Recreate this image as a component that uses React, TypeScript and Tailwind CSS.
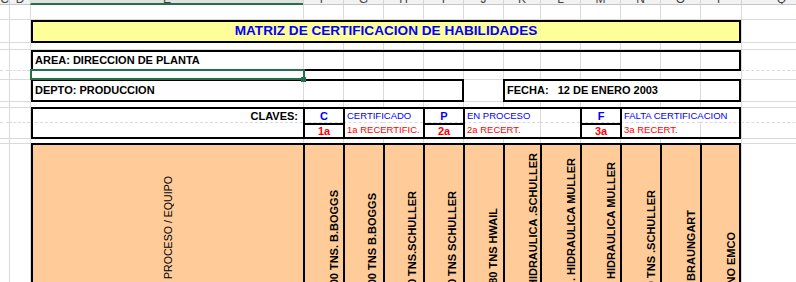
import clsx from 'clsx'

const COLS = ['C', 'D', 'E', 'F', 'G', 'H', 'I', 'J', 'K', 'L', 'M', 'N', 'O', 'P', 'Q']
const ROWS = 11

// gridline cells whose left line is covered by overflowing text
const hiddenLeft: Record<number, number[]> = {
  5: [9, 10, 11, 12],
  7: [5, 8, 12, 13],
  8: [5, 8, 12],
}
const dashedRows = [3, 7]

const sheetCols =
  'grid-cols-[9px_21px_273px_40px_40px_40px_40px_40px_37px_40px_40px_40px_40px_41px_80px]'
const sheetRows = 'grid-rows-[15px_23px_7px_21px_9px_22px_6px_15px_16px_5px_160px]'

const machines = [
  { text: 'PRENSA 500 TNS. B.BOGGS', mt: 'mt-[45px]', pr: 'pr-[2px]' },
  { text: 'PRENSA 300 TNS B.BOGGS', mt: 'mt-[48px]', pr: 'pr-[4px]' },
  { text: 'PRENSA 200 TNS.SCHULLER', mt: 'mt-[46px]', pr: 'pr-[4px]' },
  { text: 'PRENSA 400 TNS SCHULLER', mt: 'mt-[46px]', pr: 'pr-[4px]' },
  { text: 'PRENSA 180 TNS HWAIL', mt: 'mt-[63px]', pr: 'pr-[3px]' },
  { text: 'PRENSA HIDRAULICA .SCHULLER', mt: 'mt-[8px]', pr: 'pr-0' },
  { text: 'PRENSA . HIDRAULICA MULLER', mt: 'mt-[13px]', pr: 'pr-[2px]' },
  { text: 'PRENSA  HIDRAULICA MULLER', mt: 'mt-[17px]', pr: 'pr-[2px]' },
  { text: 'PRENSA 80 TNS .SCHULLER', mt: 'mt-[45px]', pr: 'pr-[2px]' },
  { text: 'TORNO  BRAUNGART', mt: 'mt-[65px]', pr: 'pr-[2px]' },
  { text: 'TORNO EMCO', mt: 'mt-[87px]', pr: 'pr-[1px]' },
]

function ColumnHeaders() {
  return (
    <div className={clsx('grid h-[5px]', sheetCols)}>
      {COLS.map((c, i) => (
        <div
          key={c}
          className={clsx(
            'flex h-[5px] justify-center overflow-hidden',
            i > 0 && 'border-l border-l-[#d4d4d4]',
            c === 'E'
              ? 'border-b-2 border-b-[#217346] bg-[#e1e1e1]'
              : 'border-b border-b-[#c6c6c6] bg-[#f2f2f2]'
          )}
        >
          <span className="-mt-[8px] text-[12px] leading-[14px] text-[#444]">{c}</span>
        </div>
      ))}
    </div>
  )
}

function GridLines() {
  const cells = []
  for (let r = 0; r < ROWS; r++) {
    for (let c = 0; c < COLS.length; c++) {
      const hide = c === 0 || (hiddenLeft[r] ?? []).includes(c)
      cells.push(
        <div
          key={`${r}-${c}`}
          className={clsx(
            'border-b border-b-[#dadada]',
            !hide && 'border-l border-l-[#dadada]',
            dashedRows.includes(r) && '[border-bottom-style:dashed]'
          )}
        />
      )
    }
  }
  return <div className={clsx('grid [grid-area:1/1]', sheetCols, sheetRows)}>{cells}</div>
}

export default function App() {
  return (
    <div className="h-[282px] w-[796px] overflow-hidden bg-white font-['Liberation_Sans',Arial,sans-serif] text-black">
      <ColumnHeaders />
      <div className="grid">
        <GridLines />

        <div className={clsx('grid [grid-area:1/1]', sheetCols, sheetRows)}>
          {/* title */}
          <div className="col-[3/15] row-[2] ml-px flex items-center justify-center border-2 border-black bg-[#ffff99]">
            <span className="text-[13.6px] font-bold text-[#0000ff]">
              MATRIZ DE CERTIFICACION DE HABILIDADES
            </span>
          </div>

          {/* area */}
          <div className="col-[3/15] row-[4] ml-px flex items-center border-2 border-black pl-[2px]">
            <span className="text-[11px] font-bold">AREA: DIRECCION DE PLANTA</span>
          </div>

          {/* selected cell */}
          <div className="relative col-[3/4] row-[5] -mt-[2px] -mr-[2px] border-2 border-[#217346]">
            <div className="absolute -right-[3px] -bottom-[4px] h-[5px] w-[5px] bg-[#217346]" />
          </div>

          {/* depto / fecha */}
          <div className="col-[3/8] row-[6] ml-px -mt-px -mr-px flex items-center border-2 border-black pl-[2px]">
            <span className="text-[11px] font-bold">DEPTO: PRODUCCION</span>
          </div>
          <div className="col-[9/15] row-[6] -mt-px flex items-center border-2 border-black pl-[2px]">
            <span className="whitespace-pre text-[11px] font-bold">FECHA:   12 DE ENERO 2003</span>
          </div>

          {/* claves */}
          <div className="col-[3/4] row-[8] ml-px -mt-px flex items-center justify-end border-t-2 border-l-2 border-black pr-[5px]">
            <span className="text-[11px] font-bold">CLAVES:</span>
          </div>
          <div className="col-[3/4] row-[9] ml-px border-b-2 border-l-2 border-black" />

          <div className="col-[4/5] row-[8] -mt-px flex items-center justify-center border-t-2 border-l-2 border-black">
            <span className="text-[11px] font-bold text-[#0000ff]">C</span>
          </div>
          <div className="col-[4/5] row-[9] flex items-center justify-center border-2 border-r-0 border-black">
            <span className="text-[11px] font-bold text-[#ff0000]">1a</span>
          </div>
          <div className="col-[5/7] row-[8] -mt-px flex items-center border-t-2 border-l-2 border-black pl-[2px]">
            <span className="text-[9.5px] text-[#0000ff]">CERTIFICADO</span>
          </div>
          <div className="col-[5/7] row-[9] flex items-center border-b-2 border-l-2 border-black pl-[2px]">
            <span className="text-[9.5px] text-[#ff0000]">1a RECERTIFIC.</span>
          </div>

          <div className="col-[7/8] row-[8] -mt-px flex items-center justify-center border-t-2 border-l-2 border-black">
            <span className="text-[11px] font-bold text-[#0000ff]">P</span>
          </div>
          <div className="col-[7/8] row-[9] flex items-center justify-center border-2 border-r-0 border-black">
            <span className="text-[11px] font-bold text-[#ff0000]">2a</span>
          </div>
          <div className="col-[8/11] row-[8] -mt-px flex items-center border-t-2 border-l-2 border-black pl-[2px]">
            <span className="text-[9.5px] text-[#0000ff]">EN PROCESO</span>
          </div>
          <div className="col-[8/11] row-[9] flex items-center border-b-2 border-l-2 border-black pl-[2px]">
            <span className="text-[9.5px] text-[#ff0000]">2a RECERT.</span>
          </div>

          <div className="col-[11/12] row-[8] -mt-px flex items-center justify-center border-t-2 border-l-2 border-black">
            <span className="text-[11px] font-bold text-[#0000ff]">F</span>
          </div>
          <div className="col-[11/12] row-[9] flex items-center justify-center border-2 border-r-0 border-black">
            <span className="text-[11px] font-bold text-[#ff0000]">3a</span>
          </div>
          <div className="col-[12/15] row-[8] -mt-px flex items-center border-t-2 border-r-2 border-l-2 border-black pl-[2px]">
            <span className="text-[9.5px] text-[#0000ff]">FALTA CERTIFICACION</span>
          </div>
          <div className="col-[12/15] row-[9] flex items-center border-r-2 border-b-2 border-l-2 border-black pl-[2px]">
            <span className="text-[9.5px] text-[#ff0000]">3a RECERT.</span>
          </div>

          {/* header row of the matrix */}
          <div className="col-[3/4] row-[11] ml-px -mt-px flex justify-center border-t-2 border-l-2 border-black bg-[#ffcc99]">
            <span className="mt-[31px] self-start whitespace-nowrap text-[10.6px] leading-[13px] rotate-180 [writing-mode:vertical-rl]">
              PROCESO / EQUIPO
            </span>
          </div>
          <div className="col-[4/15] row-[11] -mt-px grid grid-cols-[40px_40px_40px_40px_40px_37px_40px_40px_40px_40px_41px]">
            {machines.map((m, i) => (
              <div
                key={i}
                className={clsx(
                  'flex justify-end border-t-2 border-l-2 border-black bg-[#ffcc99]',
                  i === machines.length - 1 && 'border-r-2',
                  m.pr
                )}
              >
                <span
                  className={clsx(
                    'self-start whitespace-pre text-[11px] leading-[13px] font-bold rotate-180 [writing-mode:vertical-rl]',
                    m.mt
                  )}
                >
                  {m.text}
                </span>
              </div>
            ))}
          </div>
        </div>
      </div>
    </div>
  )
}
